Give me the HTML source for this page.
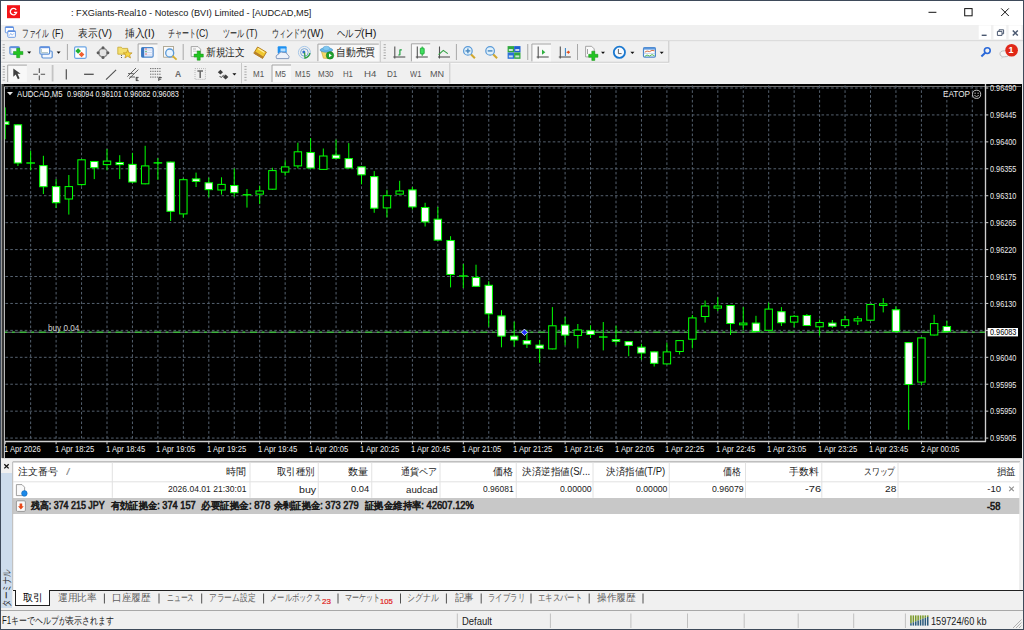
<!DOCTYPE html>
<html><head><meta charset="utf-8"><style>
html,body{margin:0;padding:0}
body{width:1024px;height:630px;position:relative;overflow:hidden;background:#f0f0f0;font-family:"Liberation Sans",sans-serif}
.t{position:absolute;white-space:nowrap;line-height:1;transform-origin:0 0}
.b{position:absolute;box-sizing:border-box}
svg{position:absolute;left:0;top:0}
</style></head><body>
<div class="b" style="left:1px;top:1px;width:1022px;height:24px;background:#fff"></div>
<svg width="1024" height="630" viewBox="0 0 1024 630"><line x1="1" y1="40.7" x2="1023" y2="40.7" stroke="#d8d8d8" stroke-width="1"/><line x1="1" y1="62.3" x2="668.8" y2="62.3" stroke="#c4c4c4" stroke-width="1"/><line x1="668.8" y1="41" x2="668.8" y2="62.5" stroke="#c8c8c8" stroke-width="1"/><line x1="1" y1="63.2" x2="668.8" y2="63.2" stroke="#ffffff" stroke-width="0.8"/><line x1="449.8" y1="63" x2="449.8" y2="83.5" stroke="#c8c8c8" stroke-width="1"/><line x1="380.3" y1="41" x2="380.3" y2="62" stroke="#c8c8c8" stroke-width="1"/><line x1="241.5" y1="63" x2="241.5" y2="83.5" stroke="#c8c8c8" stroke-width="1"/><rect x="2.6" y="44.20" width="2.2" height="1" fill="#a8a8a8"/><rect x="2.6" y="46.90" width="2.2" height="1" fill="#a8a8a8"/><rect x="2.6" y="49.60" width="2.2" height="1" fill="#a8a8a8"/><rect x="2.6" y="52.30" width="2.2" height="1" fill="#a8a8a8"/><rect x="2.6" y="55.00" width="2.2" height="1" fill="#a8a8a8"/><rect x="2.6" y="57.70" width="2.2" height="1" fill="#a8a8a8"/><rect x="383.6" y="44.20" width="2.2" height="1" fill="#a8a8a8"/><rect x="383.6" y="46.90" width="2.2" height="1" fill="#a8a8a8"/><rect x="383.6" y="49.60" width="2.2" height="1" fill="#a8a8a8"/><rect x="383.6" y="52.30" width="2.2" height="1" fill="#a8a8a8"/><rect x="383.6" y="55.00" width="2.2" height="1" fill="#a8a8a8"/><rect x="383.6" y="57.70" width="2.2" height="1" fill="#a8a8a8"/><rect x="2.7" y="66.10" width="2.2" height="1" fill="#a8a8a8"/><rect x="2.7" y="68.80" width="2.2" height="1" fill="#a8a8a8"/><rect x="2.7" y="71.50" width="2.2" height="1" fill="#a8a8a8"/><rect x="2.7" y="74.20" width="2.2" height="1" fill="#a8a8a8"/><rect x="2.7" y="76.90" width="2.2" height="1" fill="#a8a8a8"/><rect x="2.7" y="79.60" width="2.2" height="1" fill="#a8a8a8"/><rect x="244.4" y="66.10" width="2.2" height="1" fill="#a8a8a8"/><rect x="244.4" y="68.80" width="2.2" height="1" fill="#a8a8a8"/><rect x="244.4" y="71.50" width="2.2" height="1" fill="#a8a8a8"/><rect x="244.4" y="74.20" width="2.2" height="1" fill="#a8a8a8"/><rect x="244.4" y="76.90" width="2.2" height="1" fill="#a8a8a8"/><rect x="244.4" y="79.60" width="2.2" height="1" fill="#a8a8a8"/><rect x="9.9" y="46.9" width="9.3" height="7.3" rx="1.2" fill="#f4f8ff" stroke="#5b8fd4" stroke-width="1.2"/><rect x="9.6" y="46.6" width="9.9" height="1.6" fill="#5f8fe0"/><line x1="11" y1="49" x2="11" y2="53" stroke="#9ab" stroke-width="0.6"/><path d="M16.65 48.3 h3.1 v3.1500000000000004 h3.1500000000000004 v3.1 h-3.1500000000000004 v3.1500000000000004 h-3.1 v-3.1500000000000004 h-3.1500000000000004 v-3.1 h3.1500000000000004 Z" fill="#22c422" stroke="#109010" stroke-width="0.5"/><path d="M27.2 51.5 L31.2 51.5 L29.2 53.8 Z" fill="#101010"/><rect x="41.9" y="51.0" width="10.3" height="7.000000000000003" rx="1.2" fill="#f4f8ff" stroke="#5b8fd4" stroke-width="1.2"/><rect x="39.9" y="46.9" width="9.700000000000006" height="7.3" rx="1.2" fill="#ffffff" stroke="#5b8fd4" stroke-width="1.2"/><rect x="39.6" y="46.6" width="10.3" height="1.6" fill="#5f8fe0"/><path d="M41.5 49 v3.5 h6.5" fill="none" stroke="#8aa" stroke-width="0.6"/><path d="M56.6 51.5 L60.6 51.5 L58.6 53.8 Z" fill="#101010"/><line x1="67.4" y1="44" x2="67.4" y2="60" stroke="#a8a8a8" stroke-width="1"/><rect x="74.6" y="46.800000000000004" width="11.599999999999998" height="11.499999999999996" rx="1.2" fill="#ffffff" stroke="#6aa4e4" stroke-width="1.2"/><path d="M78.1 48.2 L81 51 L78.1 53.8 L75.3 51 Z" fill="#20b030"/><path d="M81.6 51.7 L84.4 54.5 L81.6 57.3 L78.8 54.5 Z" fill="#f06030"/><circle cx="103" cy="52.7" r="4.2" fill="#e4e4e4" stroke="#8c8c8c" stroke-width="1.5"/><circle cx="103" cy="47.8" r="1.5" fill="#5c5c5c"/><circle cx="103" cy="57.6" r="1.5" fill="#5c5c5c"/><circle cx="98.1" cy="52.7" r="1.5" fill="#5c5c5c"/><circle cx="107.9" cy="52.7" r="1.5" fill="#5c5c5c"/><path d="M117.8 47.2 h3.5 l1 1.2 h5.4 v5.8 h-9.9 Z" fill="#f4e070" stroke="#c8a830" stroke-width="0.8"/><path d="M127.7 49.8 L128.9 52.8 L132.1 52.9 L129.6 54.9 L130.5 58 L127.7 56.2 L124.9 58 L125.8 54.9 L123.3 52.9 L126.5 52.8 Z" fill="#f8d840" stroke="#c09020" stroke-width="0.7"/><line x1="121.5" y1="55" x2="121.5" y2="58.5" stroke="#404040" stroke-width="0.8" stroke-dasharray="1 1"/><rect x="137.6" y="43.4" width="19.900000000000006" height="18.1" fill="#f8f8f8"/><path d="M138.1 61.5 L138.1 43.9 L157.5 43.9" fill="none" stroke="#a4a4a4" stroke-width="1"/><rect x="141.6" y="47.6" width="11.49999999999999" height="9.599999999999998" rx="1.2" fill="#eef4ff" stroke="#4a86cc" stroke-width="1.2"/><rect x="141.6" y="47.6" width="2.6" height="9.6" fill="#3a76c0"/><line x1="145" y1="50" x2="153" y2="50" stroke="#b8c8e8" stroke-width="0.6"/><line x1="145" y1="52.5" x2="153" y2="52.5" stroke="#b8c8e8" stroke-width="0.6"/><line x1="145" y1="55" x2="153" y2="55" stroke="#b8c8e8" stroke-width="0.6"/><circle cx="146" cy="49" r="0.7" fill="#e04040"/><circle cx="146" cy="51.5" r="0.7" fill="#40a040"/><circle cx="146" cy="54" r="0.7" fill="#e04040"/><rect x="163.6" y="46.4" width="9.8" height="10.8" fill="#fafafa" stroke="#a09880" stroke-width="0.8"/><circle cx="169.7" cy="53" r="4" fill="#e8f4ff" stroke="#5a9ad8" stroke-width="1.3"/><line x1="172.6" y1="56" x2="176.6" y2="59.6" stroke="#d8b030" stroke-width="1.8"/><line x1="183.2" y1="44" x2="183.2" y2="60" stroke="#a8a8a8" stroke-width="1"/><path d="M191.2 46.6 h6.8 l2.6 2.6 v7.4 h-9.4 Z" fill="#fafafa" stroke="#909090" stroke-width="0.8"/><line x1="193" y1="49" x2="196" y2="49" stroke="#888" stroke-width="0.6"/><line x1="193" y1="51.2" x2="198" y2="51.2" stroke="#aaa" stroke-width="0.6"/><path d="M197.2 51.0 h3.0 v3.0999999999999996 h3.0999999999999996 v3.0 h-3.0999999999999996 v3.0999999999999996 h-3.0 v-3.0999999999999996 h-3.0999999999999996 v-3.0 h3.0999999999999996 Z" fill="#22c422" stroke="#109010" stroke-width="0.5"/><path d="M257.6 47 L266.4 52.2 L262.6 58.4 L253.8 53.2 Z" fill="#f0c830" stroke="#b07818" stroke-width="0.9"/><path d="M254 53.4 L262.6 58.4 L263.6 56.8 L255.2 51.6 Z" fill="#b8802a"/><path d="M257.8 48.6 L264.4 52.6" stroke="#fff0a0" stroke-width="1.2"/><rect x="277.7" y="46.2" width="8.9" height="7.6" rx="1" fill="#1e90f0"/><rect x="280.5" y="48.5" width="5" height="3" fill="#b8e0ff"/><path d="M276.6 58.6 Q275 55.2 278.4 54.4 Q279.6 51.2 283.2 52.4 Q287 51.8 287.6 54.8 Q290.2 55.8 288.6 58.6 Z" fill="#eef2fa" stroke="#7890b8" stroke-width="0.9"/><circle cx="304.4" cy="52.4" r="6" fill="none" stroke="#a8c8e8" stroke-width="1"/><circle cx="304.4" cy="52.4" r="3.8" fill="none" stroke="#7aa8d8" stroke-width="1"/><circle cx="303.8" cy="52" r="1.5" fill="#3070d0"/><path d="M304.6 52.6 L305 58.2 Q309 57 310 53" fill="none" stroke="#30a040" stroke-width="1.3"/><rect x="317.4" y="43.6" width="61.400000000000034" height="17.6" fill="#f8f8f8"/><path d="M317.9 61.2 L317.9 44.1 L378.8 44.1" fill="none" stroke="#a4a4a4" stroke-width="1"/><path d="M321.2 50.6 L331.6 51.4 L329.6 58.6 L323.4 58.2 Z" fill="#f4d868" stroke="#c8a030" stroke-width="0.6"/><ellipse cx="326.4" cy="50" rx="6.3" ry="2.2" fill="#68b8e8" stroke="#3a88c0" stroke-width="0.6"/><ellipse cx="326.4" cy="48.4" rx="3.4" ry="2.2" fill="#80c8f0" stroke="#4a98d0" stroke-width="0.5"/><circle cx="330" cy="55.4" r="3.7" fill="#20a030" stroke="#108018" stroke-width="0.6"/><path d="M329 53.6 L331.8 55.4 L329 57.2 Z" fill="#ffffff"/><line x1="394.8" y1="46.5" x2="394.8" y2="58.5" stroke="#555" stroke-width="1.1"/><line x1="393.3" y1="57" x2="405.3" y2="57" stroke="#555" stroke-width="1.1"/><path d="M399.9 49.4 V55.2 M398.3 55 H399.9 M399.9 49.8 H401.8" fill="none" stroke="#20a040" stroke-width="1.2"/><rect x="410.9" y="43.3" width="19.30000000000001" height="18.1" fill="#f8f8f8"/><path d="M411.4 61.4 L411.4 43.8 L430.2 43.8" fill="none" stroke="#a4a4a4" stroke-width="1"/><line x1="417.3" y1="46.5" x2="417.3" y2="58.5" stroke="#555" stroke-width="1.1"/><line x1="415.8" y1="57" x2="427.8" y2="57" stroke="#555" stroke-width="1.1"/><line x1="422.2" y1="46.5" x2="422.2" y2="56" stroke="#30b040" stroke-width="1"/><rect x="420.3" y="48" width="3.9" height="6" rx="0.8" fill="#40e060" stroke="#18a030" stroke-width="0.8"/><line x1="439.5" y1="46.5" x2="439.5" y2="58.5" stroke="#555" stroke-width="1.1"/><line x1="438.0" y1="57" x2="450.0" y2="57" stroke="#555" stroke-width="1.1"/><path d="M438.6 54.7 L443.3 50.4 L447.8 53.6" fill="none" stroke="#30a040" stroke-width="1.1"/><line x1="456.4" y1="44" x2="456.4" y2="60" stroke="#a8a8a8" stroke-width="1"/><line x1="470.9" y1="54.2" x2="474.9" y2="58.2" stroke="#d0a830" stroke-width="2"/><circle cx="467.9" cy="50.9" r="4.3" fill="#dff0fa" stroke="#5a9ad8" stroke-width="1.2"/><line x1="465.5" y1="50.9" x2="470.29999999999995" y2="50.9" stroke="#4a88c0" stroke-width="1.4"/><line x1="467.9" y1="48.5" x2="467.9" y2="53.3" stroke="#4a88c0" stroke-width="1.4"/><line x1="493.1" y1="54.2" x2="497.1" y2="58.2" stroke="#d0a830" stroke-width="2"/><circle cx="490.1" cy="50.9" r="4.3" fill="#dff0fa" stroke="#5a9ad8" stroke-width="1.2"/><line x1="487.70000000000005" y1="50.9" x2="492.5" y2="50.9" stroke="#4a88c0" stroke-width="1.4"/><rect x="507.6" y="46.1" width="6.4" height="6.3" fill="#30a840"/><rect x="514.1" y="46.1" width="6.4" height="6.3" fill="#2060d0"/><rect x="507.6" y="52.5" width="6.4" height="6.3" fill="#2a70d8"/><rect x="514.1" y="52.5" width="6.4" height="6.3" fill="#30a840"/><rect x="508.8" y="49" width="4" height="2" fill="#e8f0f0" opacity="0.85"/><rect x="515.3" y="49" width="4" height="2" fill="#e8f0f0" opacity="0.85"/><rect x="508.8" y="55.4" width="4" height="2" fill="#e8f0f0" opacity="0.85"/><rect x="515.3" y="55.4" width="4" height="2" fill="#e8f0f0" opacity="0.85"/><line x1="527.75" y1="44" x2="527.75" y2="60" stroke="#a8a8a8" stroke-width="1"/><rect x="531.4" y="43.5" width="19.600000000000023" height="17.9" fill="#f8f8f8"/><path d="M531.9 61.4 L531.9 44.0 L551 44.0" fill="none" stroke="#a4a4a4" stroke-width="1"/><line x1="538.2" y1="46.5" x2="538.2" y2="58.5" stroke="#555" stroke-width="1.1"/><line x1="536.7" y1="57" x2="548.7" y2="57" stroke="#555" stroke-width="1.1"/><path d="M542 49.6 L545.3 52.2 L542 54.8 Z" fill="#30b040"/><line x1="560.3" y1="46.5" x2="560.3" y2="58.5" stroke="#555" stroke-width="1.1"/><line x1="558.8" y1="57" x2="570.8" y2="57" stroke="#555" stroke-width="1.1"/><line x1="565.4" y1="48" x2="565.4" y2="56" stroke="#3080c8" stroke-width="1"/><path d="M566.2 52.2 L569 50.4 L569 54 Z" fill="#e05020"/><rect x="568" y="51.6" width="2" height="1.2" fill="#e05020"/><line x1="577.5" y1="44" x2="577.5" y2="60" stroke="#a8a8a8" stroke-width="1"/><path d="M585.6 46.3 h6 l2.6 2.6 v8 h-8.6 Z" fill="#fafafa" stroke="#909090" stroke-width="0.8"/><path d="M587.5 49 v5" stroke="#666" stroke-width="0.6"/><path d="M591.8 51.199999999999996 h3.0 v3.0999999999999996 h3.0999999999999996 v3.0 h-3.0999999999999996 v3.0999999999999996 h-3.0 v-3.0999999999999996 h-3.0999999999999996 v-3.0 h3.0999999999999996 Z" fill="#22c422" stroke="#109010" stroke-width="0.5"/><path d="M601 51.8 L605 51.8 L603 54.099999999999994 Z" fill="#101010"/><circle cx="619.4" cy="52.3" r="5.6" fill="#f8fbff" stroke="#1a78d0" stroke-width="1.8"/><path d="M618.4 49 V53.6 H621.6" fill="none" stroke="#404040" stroke-width="0.8"/><path d="M630.4 51.8 L634.4 51.8 L632.4 54.099999999999994 Z" fill="#101010"/><rect x="643.5" y="47.5" width="11.900000000000023" height="9.7" rx="1.2" fill="#ffffff" stroke="#4a86cc" stroke-width="1.2"/><rect x="643.6" y="47.6" width="11.8" height="2" fill="#5a96dc"/><path d="M644.8 52.2 L647 51 L649.5 51.6 L652 50.4 L654.5 50.8" fill="none" stroke="#d06030" stroke-width="0.9"/><line x1="643.6" y1="53.4" x2="655.4" y2="53.4" stroke="#9ab8e0" stroke-width="0.6"/><path d="M644.8 56.4 L647 55 L649.5 56 L652 54.6 L654.5 55.8" fill="none" stroke="#40b040" stroke-width="0.9"/><path d="M659.7 51.8 L663.7 51.8 L661.7 54.099999999999994 Z" fill="#101010"/><circle cx="987.3" cy="50.6" r="2.9" fill="none" stroke="#2a68d8" stroke-width="1.6"/><line x1="985.2" y1="52.8" x2="981.4" y2="56.4" stroke="#2a68d8" stroke-width="2"/><ellipse cx="1004.5" cy="53.8" rx="4.5" ry="3" fill="#f4f4f4" stroke="#b0b0b0" stroke-width="0.8"/><path d="M1002 56.2 L1001 59 L1005 56.6 Z" fill="#d8d8d8"/><circle cx="1011.6" cy="50.2" r="6.3" fill="#e02818"/><rect x="7.2" y="64.6" width="19.7" height="17.400000000000006" fill="#f8f8f8"/><path d="M7.7 82 L7.7 65.1 L26.9 65.1" fill="none" stroke="#a4a4a4" stroke-width="1"/><path d="M13.3 68.5 L13.3 76.8 L15.7 74.6 L17.9 79.2 L19.6 78.3 L17.5 73.8 L20.6 73.7 Z" fill="#404040"/><path d="M39.3 68.2 V72.9 M39.3 75.6 V80.3 M33.2 74.3 H37.9 M40.7 74.3 H45.1" stroke="#505050" stroke-width="1.1" fill="none"/><line x1="52.6" y1="65" x2="52.6" y2="81.5" stroke="#c4c4c4" stroke-width="1.8"/><line x1="66.3" y1="69.2" x2="66.3" y2="79.4" stroke="#505050" stroke-width="1.2"/><line x1="84.1" y1="74.3" x2="93.7" y2="74.3" stroke="#505050" stroke-width="1.3"/><line x1="106" y1="79.6" x2="116.1" y2="69.9" stroke="#505050" stroke-width="1.1"/><path d="M127.4 76.6 L136 68 M129 78.8 L138.4 69.6 M128 73.6 L133.6 73.6 M129.6 77 L135 77" stroke="#505050" stroke-width="0.9" fill="none"/><path d="M136 77.4 h2.6 M136 79 h2 M136 80.6 h2.6 M136.2 77.2 v3.6" stroke="#404040" stroke-width="0.9" fill="none"/><line x1="150" y1="68.6" x2="161" y2="68.6" stroke="#606060" stroke-width="0.9" stroke-dasharray="1.4 0.9"/><line x1="150" y1="71.3" x2="161" y2="71.3" stroke="#606060" stroke-width="0.9" stroke-dasharray="1.4 0.9"/><line x1="150" y1="74.2" x2="161" y2="74.2" stroke="#606060" stroke-width="0.9" stroke-dasharray="1.4 0.9"/><line x1="150" y1="77.1" x2="161" y2="77.1" stroke="#606060" stroke-width="0.9" stroke-dasharray="1.4 0.9"/><path d="M158.8 77.6 v3.4 M158.8 77.6 h3 M158.8 79.2 h2.4" stroke="#404040" stroke-width="0.9" fill="none"/><rect x="195" y="68.6" width="10.4" height="10.8" fill="none" stroke="#a8a8a8" stroke-width="0.8" stroke-dasharray="1 1"/><path d="M197.4 71 H203 M200.2 71 V78" stroke="#686868" stroke-width="1.5" fill="none"/><path d="M220.4 69.8 L223 72.2 L220.4 74.6 L217.8 72.2 Z" fill="#404040"/><path d="M225.6 74.4 L228.4 76.9 L225.6 79.5 L222.8 76.9 Z" fill="#404040"/><path d="M219.6 76 L221.2 77.6 L223.8 74.8" fill="none" stroke="#404040" stroke-width="1"/><path d="M232.4 73.3 L236.4 73.3 L234.4 75.6 Z" fill="#101010"/><rect x="271.5" y="64.5" width="19.5" height="17.5" fill="#f8f8f8"/><path d="M272.0 82 L272.0 65.0 L291 65.0" fill="none" stroke="#a4a4a4" stroke-width="1"/><rect x="7" y="5.2" width="13" height="13" fill="#f41418"/><path d="M16.2 9.9 A3.2 3.2 0 1 0 16.6 12.4 L13.9 12.4" fill="none" stroke="#fff" stroke-width="1.35"/><line x1="928.5" y1="12.3" x2="936.4" y2="12.3" stroke="#111" stroke-width="1"/><rect x="964.7" y="8.6" width="7.4" height="7.2" fill="none" stroke="#111" stroke-width="1"/><path d="M1001.2 8.4 L1008.8 16 M1008.8 8.4 L1001.2 16" stroke="#111" stroke-width="1"/><rect x="978.7" y="25.4" width="12.299999999999955" height="13.9" fill="#ffffff"/><rect x="993.5" y="25.4" width="12.799999999999955" height="13.9" fill="#ffffff"/><rect x="1008.6" y="25.4" width="12.799999999999955" height="13.9" fill="#ffffff"/><rect x="981.7" y="34.6" width="4.9" height="1.4" fill="#4a5870"/><path d="M997.4 31.4 h4.6 v4 h-4.6 Z M999 31.4 v-1.6 h4.6 v4 h-1.6" fill="none" stroke="#4a5870" stroke-width="1"/><path d="M1012.8 30.4 L1017.8 35.6 M1017.8 30.4 L1012.8 35.6" stroke="#4a5870" stroke-width="1.5"/><rect x="5.3" y="26.8" width="8.2" height="6" rx="0.8" fill="#ffffff" stroke="#6d9be4" stroke-width="1"/><rect x="5.3" y="26.6" width="8.2" height="1.4" fill="#5f8fe0"/><rect x="7.8" y="30.8" width="7.6" height="6.5" rx="0.8" fill="#ffffff" stroke="#6d9be4" stroke-width="1"/><rect x="7.8" y="30.6" width="7.6" height="1.4" fill="#5f8fe0"/><path d="M9.3 35.6 L10.8 33.4 L12.2 35.2 L13.8 33.4" fill="none" stroke="#80a8e8" stroke-width="0.8"/></svg>
<div class="b" style="left:2px;top:84px;width:1021px;height:374px;background:#000"></div>
<div class="b" style="left:1px;top:84px;width:1.3px;height:374px;background:#9a9a9a"></div>
<div class="b" style="left:2.3px;top:84px;width:1.8px;height:374px;background:#383838"></div>
<div class="b" style="left:4px;top:86.5px;width:1px;height:371px;background:#b8b8b8"></div>
<div class="b" style="left:4px;top:86.3px;width:1017px;height:0.7px;background:#707070"></div>
<div class="b" style="left:1021.5px;top:84px;width:1.5px;height:374px;background:#e8e8e8"></div>
<div class="b" style="left:2px;top:458.3px;width:1021px;height:1px;background:#d8d8d8"></div>
<svg style="position:absolute;left:0;top:0" width="1024" height="630" viewBox="0 0 1024 630"><line x1="30.65" y1="85.5" x2="30.65" y2="441" stroke="#566270" stroke-width="1" stroke-dasharray="2.6 2.2"/><line x1="56.10" y1="85.5" x2="56.10" y2="441" stroke="#566270" stroke-width="1" stroke-dasharray="2.6 2.2"/><line x1="81.55" y1="85.5" x2="81.55" y2="441" stroke="#566270" stroke-width="1" stroke-dasharray="2.6 2.2"/><line x1="107.00" y1="85.5" x2="107.00" y2="441" stroke="#566270" stroke-width="1" stroke-dasharray="2.6 2.2"/><line x1="132.45" y1="85.5" x2="132.45" y2="441" stroke="#566270" stroke-width="1" stroke-dasharray="2.6 2.2"/><line x1="157.90" y1="85.5" x2="157.90" y2="441" stroke="#566270" stroke-width="1" stroke-dasharray="2.6 2.2"/><line x1="183.35" y1="85.5" x2="183.35" y2="441" stroke="#566270" stroke-width="1" stroke-dasharray="2.6 2.2"/><line x1="208.80" y1="85.5" x2="208.80" y2="441" stroke="#566270" stroke-width="1" stroke-dasharray="2.6 2.2"/><line x1="234.25" y1="85.5" x2="234.25" y2="441" stroke="#566270" stroke-width="1" stroke-dasharray="2.6 2.2"/><line x1="259.70" y1="85.5" x2="259.70" y2="441" stroke="#566270" stroke-width="1" stroke-dasharray="2.6 2.2"/><line x1="285.15" y1="85.5" x2="285.15" y2="441" stroke="#566270" stroke-width="1" stroke-dasharray="2.6 2.2"/><line x1="310.60" y1="85.5" x2="310.60" y2="441" stroke="#566270" stroke-width="1" stroke-dasharray="2.6 2.2"/><line x1="336.05" y1="85.5" x2="336.05" y2="441" stroke="#566270" stroke-width="1" stroke-dasharray="2.6 2.2"/><line x1="361.50" y1="85.5" x2="361.50" y2="441" stroke="#566270" stroke-width="1" stroke-dasharray="2.6 2.2"/><line x1="386.95" y1="85.5" x2="386.95" y2="441" stroke="#566270" stroke-width="1" stroke-dasharray="2.6 2.2"/><line x1="412.40" y1="85.5" x2="412.40" y2="441" stroke="#566270" stroke-width="1" stroke-dasharray="2.6 2.2"/><line x1="437.85" y1="85.5" x2="437.85" y2="441" stroke="#566270" stroke-width="1" stroke-dasharray="2.6 2.2"/><line x1="463.30" y1="85.5" x2="463.30" y2="441" stroke="#566270" stroke-width="1" stroke-dasharray="2.6 2.2"/><line x1="488.75" y1="85.5" x2="488.75" y2="441" stroke="#566270" stroke-width="1" stroke-dasharray="2.6 2.2"/><line x1="514.20" y1="85.5" x2="514.20" y2="441" stroke="#566270" stroke-width="1" stroke-dasharray="2.6 2.2"/><line x1="539.65" y1="85.5" x2="539.65" y2="441" stroke="#566270" stroke-width="1" stroke-dasharray="2.6 2.2"/><line x1="565.10" y1="85.5" x2="565.10" y2="441" stroke="#566270" stroke-width="1" stroke-dasharray="2.6 2.2"/><line x1="590.55" y1="85.5" x2="590.55" y2="441" stroke="#566270" stroke-width="1" stroke-dasharray="2.6 2.2"/><line x1="616.00" y1="85.5" x2="616.00" y2="441" stroke="#566270" stroke-width="1" stroke-dasharray="2.6 2.2"/><line x1="641.45" y1="85.5" x2="641.45" y2="441" stroke="#566270" stroke-width="1" stroke-dasharray="2.6 2.2"/><line x1="666.90" y1="85.5" x2="666.90" y2="441" stroke="#566270" stroke-width="1" stroke-dasharray="2.6 2.2"/><line x1="692.35" y1="85.5" x2="692.35" y2="441" stroke="#566270" stroke-width="1" stroke-dasharray="2.6 2.2"/><line x1="717.80" y1="85.5" x2="717.80" y2="441" stroke="#566270" stroke-width="1" stroke-dasharray="2.6 2.2"/><line x1="743.25" y1="85.5" x2="743.25" y2="441" stroke="#566270" stroke-width="1" stroke-dasharray="2.6 2.2"/><line x1="768.70" y1="85.5" x2="768.70" y2="441" stroke="#566270" stroke-width="1" stroke-dasharray="2.6 2.2"/><line x1="794.15" y1="85.5" x2="794.15" y2="441" stroke="#566270" stroke-width="1" stroke-dasharray="2.6 2.2"/><line x1="819.60" y1="85.5" x2="819.60" y2="441" stroke="#566270" stroke-width="1" stroke-dasharray="2.6 2.2"/><line x1="845.05" y1="85.5" x2="845.05" y2="441" stroke="#566270" stroke-width="1" stroke-dasharray="2.6 2.2"/><line x1="870.50" y1="85.5" x2="870.50" y2="441" stroke="#566270" stroke-width="1" stroke-dasharray="2.6 2.2"/><line x1="895.95" y1="85.5" x2="895.95" y2="441" stroke="#566270" stroke-width="1" stroke-dasharray="2.6 2.2"/><line x1="921.40" y1="85.5" x2="921.40" y2="441" stroke="#566270" stroke-width="1" stroke-dasharray="2.6 2.2"/><line x1="946.85" y1="85.5" x2="946.85" y2="441" stroke="#566270" stroke-width="1" stroke-dasharray="2.6 2.2"/><line x1="972.30" y1="85.5" x2="972.30" y2="441" stroke="#566270" stroke-width="1" stroke-dasharray="2.6 2.2"/><line x1="5.5" y1="88.00" x2="985" y2="88.00" stroke="#566270" stroke-width="1" stroke-dasharray="2.6 2.2"/><line x1="5.5" y1="114.93" x2="985" y2="114.93" stroke="#566270" stroke-width="1" stroke-dasharray="2.6 2.2"/><line x1="5.5" y1="141.86" x2="985" y2="141.86" stroke="#566270" stroke-width="1" stroke-dasharray="2.6 2.2"/><line x1="5.5" y1="168.79" x2="985" y2="168.79" stroke="#566270" stroke-width="1" stroke-dasharray="2.6 2.2"/><line x1="5.5" y1="195.72" x2="985" y2="195.72" stroke="#566270" stroke-width="1" stroke-dasharray="2.6 2.2"/><line x1="5.5" y1="222.65" x2="985" y2="222.65" stroke="#566270" stroke-width="1" stroke-dasharray="2.6 2.2"/><line x1="5.5" y1="249.58" x2="985" y2="249.58" stroke="#566270" stroke-width="1" stroke-dasharray="2.6 2.2"/><line x1="5.5" y1="276.51" x2="985" y2="276.51" stroke="#566270" stroke-width="1" stroke-dasharray="2.6 2.2"/><line x1="5.5" y1="303.44" x2="985" y2="303.44" stroke="#566270" stroke-width="1" stroke-dasharray="2.6 2.2"/><line x1="5.5" y1="330.37" x2="985" y2="330.37" stroke="#566270" stroke-width="1" stroke-dasharray="2.6 2.2"/><line x1="5.5" y1="357.30" x2="985" y2="357.30" stroke="#566270" stroke-width="1" stroke-dasharray="2.6 2.2"/><line x1="5.5" y1="384.23" x2="985" y2="384.23" stroke="#566270" stroke-width="1" stroke-dasharray="2.6 2.2"/><line x1="5.5" y1="411.16" x2="985" y2="411.16" stroke="#566270" stroke-width="1" stroke-dasharray="2.6 2.2"/><line x1="5.5" y1="438.09" x2="985" y2="438.09" stroke="#566270" stroke-width="1" stroke-dasharray="2.6 2.2"/><line x1="5" y1="332.2" x2="985" y2="332.2" stroke="#6c7480" stroke-width="1.1"/><line x1="5" y1="332.3" x2="985" y2="332.3" stroke="#3cb43c" stroke-width="1.5" stroke-dasharray="7 4.6 2.8 4.8" stroke-dashoffset="4.6"/><defs><clipPath id="cc"><rect x="4.9" y="84" width="981" height="358"/></clipPath></defs><g clip-path="url(#cc)"><line x1="5.20" y1="107.4" x2="5.20" y2="139.3" stroke="#00ff00" stroke-width="1.0"/><rect x="1.50" y="121.80" width="7.4" height="2.60" fill="#ffffff" stroke="#00ff00" stroke-width="1.05"/><line x1="17.93" y1="124.3" x2="17.93" y2="166" stroke="#00ff00" stroke-width="1.0"/><rect x="14.23" y="124.80" width="7.4" height="38.20" fill="#ffffff" stroke="#00ff00" stroke-width="1.05"/><line x1="30.65" y1="150.7" x2="30.65" y2="170.3" stroke="#00ff00" stroke-width="1.0"/><line x1="26.35" y1="163" x2="34.95" y2="163" stroke="#00ff00" stroke-width="1.4"/><line x1="43.38" y1="155.8" x2="43.38" y2="194" stroke="#00ff00" stroke-width="1.0"/><rect x="39.67" y="165.60" width="7.4" height="21.10" fill="#ffffff" stroke="#00ff00" stroke-width="1.05"/><line x1="56.10" y1="179.1" x2="56.10" y2="208" stroke="#00ff00" stroke-width="1.0"/><rect x="52.40" y="186.60" width="7.4" height="16.10" fill="#ffffff" stroke="#00ff00" stroke-width="1.05"/><line x1="68.83" y1="175" x2="68.83" y2="214.6" stroke="#00ff00" stroke-width="1.0"/><rect x="65.12" y="186.60" width="7.4" height="12.40" fill="#000000" stroke="#00ff00" stroke-width="1.05"/><line x1="81.55" y1="159.3" x2="81.55" y2="185.7" stroke="#00ff00" stroke-width="1.0"/><rect x="77.85" y="159.80" width="7.4" height="24.80" fill="#000000" stroke="#00ff00" stroke-width="1.05"/><line x1="94.28" y1="161" x2="94.28" y2="179.1" stroke="#00ff00" stroke-width="1.0"/><rect x="90.58" y="161.50" width="7.4" height="6.20" fill="#ffffff" stroke="#00ff00" stroke-width="1.05"/><line x1="107.00" y1="149" x2="107.00" y2="170.3" stroke="#00ff00" stroke-width="1.0"/><rect x="103.30" y="161.10" width="7.4" height="3.50" fill="#000000" stroke="#00ff00" stroke-width="1.05"/><line x1="119.72" y1="155.2" x2="119.72" y2="179.1" stroke="#00ff00" stroke-width="1.0"/><rect x="116.02" y="162.50" width="7.4" height="2.10" fill="#ffffff" stroke="#00ff00" stroke-width="1.05"/><line x1="132.45" y1="153" x2="132.45" y2="183" stroke="#00ff00" stroke-width="1.0"/><rect x="128.75" y="164.40" width="7.4" height="17.60" fill="#ffffff" stroke="#00ff00" stroke-width="1.05"/><line x1="145.17" y1="145.8" x2="145.17" y2="184.3" stroke="#00ff00" stroke-width="1.0"/><rect x="141.47" y="165.90" width="7.4" height="17.90" fill="#000000" stroke="#00ff00" stroke-width="1.05"/><line x1="157.90" y1="158.1" x2="157.90" y2="179.8" stroke="#00ff00" stroke-width="1.0"/><line x1="153.60" y1="162.9" x2="162.20" y2="162.9" stroke="#00ff00" stroke-width="1.4"/><line x1="170.62" y1="161.6" x2="170.62" y2="221" stroke="#00ff00" stroke-width="1.0"/><rect x="166.92" y="162.10" width="7.4" height="49.20" fill="#ffffff" stroke="#00ff00" stroke-width="1.05"/><line x1="183.35" y1="178.1" x2="183.35" y2="217.5" stroke="#00ff00" stroke-width="1.0"/><rect x="179.65" y="179.70" width="7.4" height="34.20" fill="#000000" stroke="#00ff00" stroke-width="1.05"/><line x1="196.07" y1="172.6" x2="196.07" y2="187" stroke="#00ff00" stroke-width="1.0"/><rect x="192.38" y="178.90" width="7.4" height="2.50" fill="#ffffff" stroke="#00ff00" stroke-width="1.05"/><line x1="208.80" y1="177.7" x2="208.80" y2="197.3" stroke="#00ff00" stroke-width="1.0"/><rect x="205.10" y="182.80" width="7.4" height="6.80" fill="#ffffff" stroke="#00ff00" stroke-width="1.05"/><line x1="221.52" y1="177.3" x2="221.52" y2="194.6" stroke="#00ff00" stroke-width="1.0"/><rect x="217.82" y="184.40" width="7.4" height="5.60" fill="#000000" stroke="#00ff00" stroke-width="1.05"/><line x1="234.25" y1="168.5" x2="234.25" y2="196.7" stroke="#00ff00" stroke-width="1.0"/><rect x="230.55" y="185.50" width="7.4" height="7.20" fill="#ffffff" stroke="#00ff00" stroke-width="1.05"/><line x1="246.97" y1="189" x2="246.97" y2="207.6" stroke="#00ff00" stroke-width="1.0"/><line x1="242.67" y1="194.8" x2="251.28" y2="194.8" stroke="#00ff00" stroke-width="1.4"/><line x1="259.70" y1="185.6" x2="259.70" y2="204.1" stroke="#00ff00" stroke-width="1.0"/><rect x="256.00" y="191.00" width="7.4" height="3.10" fill="#000000" stroke="#00ff00" stroke-width="1.05"/><line x1="272.42" y1="167.8" x2="272.42" y2="189.7" stroke="#00ff00" stroke-width="1.0"/><rect x="268.72" y="170.60" width="7.4" height="18.60" fill="#000000" stroke="#00ff00" stroke-width="1.05"/><line x1="285.15" y1="160.2" x2="285.15" y2="175.7" stroke="#00ff00" stroke-width="1.0"/><rect x="281.45" y="166.90" width="7.4" height="5.20" fill="#000000" stroke="#00ff00" stroke-width="1.05"/><line x1="297.88" y1="142.7" x2="297.88" y2="168.5" stroke="#00ff00" stroke-width="1.0"/><rect x="294.18" y="151.80" width="7.4" height="14.10" fill="#000000" stroke="#00ff00" stroke-width="1.05"/><line x1="310.60" y1="138.1" x2="310.60" y2="168.5" stroke="#00ff00" stroke-width="1.0"/><rect x="306.90" y="152.50" width="7.4" height="15.50" fill="#ffffff" stroke="#00ff00" stroke-width="1.05"/><line x1="323.32" y1="148.5" x2="323.32" y2="169.9" stroke="#00ff00" stroke-width="1.0"/><rect x="319.62" y="156.00" width="7.4" height="13.40" fill="#000000" stroke="#00ff00" stroke-width="1.05"/><line x1="336.05" y1="139.6" x2="336.05" y2="158.8" stroke="#00ff00" stroke-width="1.0"/><rect x="332.35" y="155.10" width="7.4" height="3.20" fill="#ffffff" stroke="#00ff00" stroke-width="1.05"/><line x1="348.77" y1="143.1" x2="348.77" y2="168.5" stroke="#00ff00" stroke-width="1.0"/><rect x="345.07" y="158.60" width="7.4" height="9.40" fill="#ffffff" stroke="#00ff00" stroke-width="1.05"/><line x1="361.50" y1="166.4" x2="361.50" y2="184.3" stroke="#00ff00" stroke-width="1.0"/><rect x="357.80" y="166.90" width="7.4" height="7.90" fill="#ffffff" stroke="#00ff00" stroke-width="1.05"/><line x1="374.22" y1="171.1" x2="374.22" y2="212.8" stroke="#00ff00" stroke-width="1.0"/><rect x="370.52" y="176.60" width="7.4" height="31.60" fill="#ffffff" stroke="#00ff00" stroke-width="1.05"/><line x1="386.95" y1="189.8" x2="386.95" y2="217.3" stroke="#00ff00" stroke-width="1.0"/><rect x="383.25" y="195.70" width="7.4" height="12.20" fill="#000000" stroke="#00ff00" stroke-width="1.05"/><line x1="399.67" y1="180.8" x2="399.67" y2="194.6" stroke="#00ff00" stroke-width="1.0"/><rect x="395.97" y="191.00" width="7.4" height="3.10" fill="#000000" stroke="#00ff00" stroke-width="1.05"/><line x1="412.40" y1="187" x2="412.40" y2="209.6" stroke="#00ff00" stroke-width="1.0"/><rect x="408.70" y="189.90" width="7.4" height="17.00" fill="#ffffff" stroke="#00ff00" stroke-width="1.05"/><line x1="425.12" y1="202.8" x2="425.12" y2="226.5" stroke="#00ff00" stroke-width="1.0"/><rect x="421.43" y="207.50" width="7.4" height="14.40" fill="#ffffff" stroke="#00ff00" stroke-width="1.05"/><line x1="437.85" y1="207" x2="437.85" y2="240.6" stroke="#00ff00" stroke-width="1.0"/><rect x="434.15" y="219.20" width="7.4" height="20.90" fill="#ffffff" stroke="#00ff00" stroke-width="1.05"/><line x1="450.57" y1="236.2" x2="450.57" y2="287.4" stroke="#00ff00" stroke-width="1.0"/><rect x="446.88" y="240.50" width="7.4" height="34.00" fill="#ffffff" stroke="#00ff00" stroke-width="1.05"/><line x1="463.30" y1="264" x2="463.30" y2="288" stroke="#00ff00" stroke-width="1.0"/><line x1="459.00" y1="276" x2="467.60" y2="276" stroke="#00ff00" stroke-width="1.4"/><line x1="476.02" y1="264.7" x2="476.02" y2="286.8" stroke="#00ff00" stroke-width="1.0"/><rect x="472.32" y="277.50" width="7.4" height="8.80" fill="#ffffff" stroke="#00ff00" stroke-width="1.05"/><line x1="488.75" y1="281.2" x2="488.75" y2="326.7" stroke="#00ff00" stroke-width="1.0"/><rect x="485.05" y="285.30" width="7.4" height="28.50" fill="#ffffff" stroke="#00ff00" stroke-width="1.05"/><line x1="501.47" y1="310.2" x2="501.47" y2="347.3" stroke="#00ff00" stroke-width="1.0"/><rect x="497.77" y="315.90" width="7.4" height="20.20" fill="#ffffff" stroke="#00ff00" stroke-width="1.05"/><line x1="514.20" y1="321.6" x2="514.20" y2="346.7" stroke="#00ff00" stroke-width="1.0"/><rect x="510.50" y="336.10" width="7.4" height="3.90" fill="#ffffff" stroke="#00ff00" stroke-width="1.05"/><line x1="526.93" y1="329.8" x2="526.93" y2="348" stroke="#00ff00" stroke-width="1.0"/><rect x="523.23" y="340.60" width="7.4" height="3.50" fill="#ffffff" stroke="#00ff00" stroke-width="1.05"/><line x1="539.65" y1="340" x2="539.65" y2="362.8" stroke="#00ff00" stroke-width="1.0"/><rect x="535.95" y="345.10" width="7.4" height="3.20" fill="#ffffff" stroke="#00ff00" stroke-width="1.05"/><line x1="552.38" y1="307.1" x2="552.38" y2="349.4" stroke="#00ff00" stroke-width="1.0"/><rect x="548.67" y="325.80" width="7.4" height="23.10" fill="#000000" stroke="#00ff00" stroke-width="1.05"/><line x1="565.10" y1="317" x2="565.10" y2="345.3" stroke="#00ff00" stroke-width="1.0"/><rect x="561.40" y="325.10" width="7.4" height="10.00" fill="#ffffff" stroke="#00ff00" stroke-width="1.05"/><line x1="577.83" y1="324" x2="577.83" y2="348.4" stroke="#00ff00" stroke-width="1.0"/><rect x="574.12" y="329.90" width="7.4" height="5.60" fill="#000000" stroke="#00ff00" stroke-width="1.05"/><line x1="590.55" y1="325.3" x2="590.55" y2="338" stroke="#00ff00" stroke-width="1.0"/><rect x="586.85" y="330.70" width="7.4" height="3.80" fill="#ffffff" stroke="#00ff00" stroke-width="1.05"/><line x1="603.27" y1="322" x2="603.27" y2="350.4" stroke="#00ff00" stroke-width="1.0"/><line x1="598.98" y1="337" x2="607.57" y2="337" stroke="#00ff00" stroke-width="1.4"/><line x1="616.00" y1="325.7" x2="616.00" y2="345.3" stroke="#00ff00" stroke-width="1.0"/><rect x="612.30" y="339.60" width="7.4" height="1.70" fill="#ffffff" stroke="#00ff00" stroke-width="1.05"/><line x1="628.73" y1="341.1" x2="628.73" y2="356.2" stroke="#00ff00" stroke-width="1.0"/><rect x="625.02" y="341.60" width="7.4" height="3.80" fill="#ffffff" stroke="#00ff00" stroke-width="1.05"/><line x1="641.45" y1="343.8" x2="641.45" y2="359.7" stroke="#00ff00" stroke-width="1.0"/><rect x="637.75" y="347.20" width="7.4" height="5.80" fill="#ffffff" stroke="#00ff00" stroke-width="1.05"/><line x1="654.18" y1="351.4" x2="654.18" y2="366.5" stroke="#00ff00" stroke-width="1.0"/><rect x="650.48" y="351.90" width="7.4" height="11.40" fill="#ffffff" stroke="#00ff00" stroke-width="1.05"/><line x1="666.90" y1="342.6" x2="666.90" y2="364.4" stroke="#00ff00" stroke-width="1.0"/><rect x="663.20" y="351.90" width="7.4" height="12.00" fill="#000000" stroke="#00ff00" stroke-width="1.05"/><line x1="679.62" y1="340.1" x2="679.62" y2="354.5" stroke="#00ff00" stroke-width="1.0"/><rect x="675.92" y="340.60" width="7.4" height="10.90" fill="#000000" stroke="#00ff00" stroke-width="1.05"/><line x1="692.35" y1="315" x2="692.35" y2="348.4" stroke="#00ff00" stroke-width="1.0"/><rect x="688.65" y="317.90" width="7.4" height="21.30" fill="#000000" stroke="#00ff00" stroke-width="1.05"/><line x1="705.08" y1="300.5" x2="705.08" y2="322.6" stroke="#00ff00" stroke-width="1.0"/><rect x="701.38" y="306.00" width="7.4" height="10.50" fill="#000000" stroke="#00ff00" stroke-width="1.05"/><line x1="717.80" y1="297.2" x2="717.80" y2="311.2" stroke="#00ff00" stroke-width="1.0"/><rect x="714.10" y="306.00" width="7.4" height="2.10" fill="#000000" stroke="#00ff00" stroke-width="1.05"/><line x1="730.52" y1="305" x2="730.52" y2="335" stroke="#00ff00" stroke-width="1.0"/><rect x="726.82" y="305.50" width="7.4" height="18.00" fill="#ffffff" stroke="#00ff00" stroke-width="1.05"/><line x1="743.25" y1="307.1" x2="743.25" y2="330.2" stroke="#00ff00" stroke-width="1.0"/><rect x="739.55" y="323.10" width="7.4" height="1.70" fill="#000000" stroke="#00ff00" stroke-width="1.05"/><line x1="755.98" y1="315.8" x2="755.98" y2="331.9" stroke="#00ff00" stroke-width="1.0"/><rect x="752.27" y="323.10" width="7.4" height="8.30" fill="#ffffff" stroke="#00ff00" stroke-width="1.05"/><line x1="768.70" y1="302.6" x2="768.70" y2="331" stroke="#00ff00" stroke-width="1.0"/><rect x="765.00" y="309.10" width="7.4" height="21.20" fill="#000000" stroke="#00ff00" stroke-width="1.05"/><line x1="781.43" y1="307.1" x2="781.43" y2="326" stroke="#00ff00" stroke-width="1.0"/><rect x="777.73" y="311.70" width="7.4" height="11.00" fill="#ffffff" stroke="#00ff00" stroke-width="1.05"/><line x1="794.15" y1="315" x2="794.15" y2="327.3" stroke="#00ff00" stroke-width="1.0"/><rect x="790.45" y="316.30" width="7.4" height="5.80" fill="#000000" stroke="#00ff00" stroke-width="1.05"/><line x1="806.88" y1="314" x2="806.88" y2="326" stroke="#00ff00" stroke-width="1.0"/><rect x="803.17" y="315.50" width="7.4" height="10.00" fill="#ffffff" stroke="#00ff00" stroke-width="1.05"/><line x1="819.60" y1="319.5" x2="819.60" y2="335.6" stroke="#00ff00" stroke-width="1.0"/><rect x="815.90" y="322.50" width="7.4" height="4.30" fill="#000000" stroke="#00ff00" stroke-width="1.05"/><line x1="832.33" y1="320" x2="832.33" y2="328" stroke="#00ff00" stroke-width="1.0"/><rect x="828.62" y="323.10" width="7.4" height="3.10" fill="#ffffff" stroke="#00ff00" stroke-width="1.05"/><line x1="845.05" y1="315.8" x2="845.05" y2="328" stroke="#00ff00" stroke-width="1.0"/><rect x="841.35" y="319.80" width="7.4" height="5.80" fill="#000000" stroke="#00ff00" stroke-width="1.05"/><line x1="857.77" y1="316" x2="857.77" y2="325" stroke="#00ff00" stroke-width="1.0"/><rect x="854.07" y="318.80" width="7.4" height="2.10" fill="#000000" stroke="#00ff00" stroke-width="1.05"/><line x1="870.50" y1="304" x2="870.50" y2="321" stroke="#00ff00" stroke-width="1.0"/><rect x="866.80" y="304.50" width="7.4" height="15.70" fill="#000000" stroke="#00ff00" stroke-width="1.05"/><line x1="883.23" y1="298.1" x2="883.23" y2="312.4" stroke="#00ff00" stroke-width="1.0"/><rect x="879.52" y="303.80" width="7.4" height="1.70" fill="#000000" stroke="#00ff00" stroke-width="1.05"/><line x1="895.95" y1="306.4" x2="895.95" y2="331.9" stroke="#00ff00" stroke-width="1.0"/><rect x="892.25" y="309.80" width="7.4" height="21.60" fill="#ffffff" stroke="#00ff00" stroke-width="1.05"/><line x1="908.68" y1="342.1" x2="908.68" y2="429.8" stroke="#00ff00" stroke-width="1.0"/><rect x="904.98" y="342.60" width="7.4" height="41.90" fill="#ffffff" stroke="#00ff00" stroke-width="1.05"/><line x1="921.40" y1="337.4" x2="921.40" y2="385" stroke="#00ff00" stroke-width="1.0"/><rect x="917.70" y="337.90" width="7.4" height="44.20" fill="#000000" stroke="#00ff00" stroke-width="1.05"/><line x1="934.12" y1="314.8" x2="934.12" y2="335.5" stroke="#00ff00" stroke-width="1.0"/><rect x="930.42" y="323.60" width="7.4" height="11.40" fill="#000000" stroke="#00ff00" stroke-width="1.05"/><line x1="946.85" y1="320.7" x2="946.85" y2="331.9" stroke="#00ff00" stroke-width="1.0"/><rect x="943.15" y="326.50" width="7.4" height="4.90" fill="#ffffff" stroke="#00ff00" stroke-width="1.05"/></g><line x1="985.5" y1="84" x2="985.5" y2="441.5" stroke="#d0d0d0" stroke-width="1.35"/><line x1="5" y1="441.5" x2="986" y2="441.5" stroke="#d0d0d0" stroke-width="1.35"/><line x1="985.5" y1="88.00" x2="988.3" y2="88.00" stroke="#d0d0d0" stroke-width="1"/><line x1="985.5" y1="114.93" x2="988.3" y2="114.93" stroke="#d0d0d0" stroke-width="1"/><line x1="985.5" y1="141.86" x2="988.3" y2="141.86" stroke="#d0d0d0" stroke-width="1"/><line x1="985.5" y1="168.79" x2="988.3" y2="168.79" stroke="#d0d0d0" stroke-width="1"/><line x1="985.5" y1="195.72" x2="988.3" y2="195.72" stroke="#d0d0d0" stroke-width="1"/><line x1="985.5" y1="222.65" x2="988.3" y2="222.65" stroke="#d0d0d0" stroke-width="1"/><line x1="985.5" y1="249.58" x2="988.3" y2="249.58" stroke="#d0d0d0" stroke-width="1"/><line x1="985.5" y1="276.51" x2="988.3" y2="276.51" stroke="#d0d0d0" stroke-width="1"/><line x1="985.5" y1="303.44" x2="988.3" y2="303.44" stroke="#d0d0d0" stroke-width="1"/><line x1="985.5" y1="330.37" x2="988.3" y2="330.37" stroke="#d0d0d0" stroke-width="1"/><line x1="985.5" y1="357.30" x2="988.3" y2="357.30" stroke="#d0d0d0" stroke-width="1"/><line x1="985.5" y1="384.23" x2="988.3" y2="384.23" stroke="#d0d0d0" stroke-width="1"/><line x1="985.5" y1="411.16" x2="988.3" y2="411.16" stroke="#d0d0d0" stroke-width="1"/><line x1="985.5" y1="438.09" x2="988.3" y2="438.09" stroke="#d0d0d0" stroke-width="1"/><line x1="5.20" y1="441.5" x2="5.20" y2="444.2" stroke="#d0d0d0" stroke-width="1"/><line x1="56.10" y1="441.5" x2="56.10" y2="444.2" stroke="#d0d0d0" stroke-width="1"/><line x1="107.00" y1="441.5" x2="107.00" y2="444.2" stroke="#d0d0d0" stroke-width="1"/><line x1="157.90" y1="441.5" x2="157.90" y2="444.2" stroke="#d0d0d0" stroke-width="1"/><line x1="208.80" y1="441.5" x2="208.80" y2="444.2" stroke="#d0d0d0" stroke-width="1"/><line x1="259.70" y1="441.5" x2="259.70" y2="444.2" stroke="#d0d0d0" stroke-width="1"/><line x1="310.60" y1="441.5" x2="310.60" y2="444.2" stroke="#d0d0d0" stroke-width="1"/><line x1="361.50" y1="441.5" x2="361.50" y2="444.2" stroke="#d0d0d0" stroke-width="1"/><line x1="412.40" y1="441.5" x2="412.40" y2="444.2" stroke="#d0d0d0" stroke-width="1"/><line x1="463.30" y1="441.5" x2="463.30" y2="444.2" stroke="#d0d0d0" stroke-width="1"/><line x1="514.20" y1="441.5" x2="514.20" y2="444.2" stroke="#d0d0d0" stroke-width="1"/><line x1="565.10" y1="441.5" x2="565.10" y2="444.2" stroke="#d0d0d0" stroke-width="1"/><line x1="616.00" y1="441.5" x2="616.00" y2="444.2" stroke="#d0d0d0" stroke-width="1"/><line x1="666.90" y1="441.5" x2="666.90" y2="444.2" stroke="#d0d0d0" stroke-width="1"/><line x1="717.80" y1="441.5" x2="717.80" y2="444.2" stroke="#d0d0d0" stroke-width="1"/><line x1="768.70" y1="441.5" x2="768.70" y2="444.2" stroke="#d0d0d0" stroke-width="1"/><line x1="819.60" y1="441.5" x2="819.60" y2="444.2" stroke="#d0d0d0" stroke-width="1"/><line x1="870.50" y1="441.5" x2="870.50" y2="444.2" stroke="#d0d0d0" stroke-width="1"/><line x1="921.40" y1="441.5" x2="921.40" y2="444.2" stroke="#d0d0d0" stroke-width="1"/><rect x="987.6" y="328" width="30.4" height="8.4" fill="#ffffff"/><path d="M524.4 329.1 L527.6 332.3 L524.4 335.5 L521.2 332.3 Z" fill="#2030ff" stroke="#e0e4ff" stroke-width="0.9"/><path d="M7 92 L13 92 L10 95.3 Z" fill="#e8e8e8"/><circle cx="976.6" cy="94.3" r="4.1" fill="none" stroke="#d8d8d8" stroke-width="0.9"/><circle cx="975.1" cy="93.2" r="0.6" fill="#d8d8d8"/><circle cx="978.1" cy="93.2" r="0.6" fill="#d8d8d8"/><path d="M974.4 95.4 Q976.6 97.6 978.8 95.4" fill="none" stroke="#d8d8d8" stroke-width="0.8"/></svg>
<div class="b" style="left:13px;top:462px;width:1007px;height:128px;background:#fff"></div>
<div class="b" style="left:13px;top:497.8px;width:1007px;height:15.8px;background:#c8c8c8"></div>
<div class="b" style="left:1.3px;top:472.8px;width:11.2px;height:135px;background:#cddcec"></div>
<div class="b" style="left:12.5px;top:590px;width:2.5px;height:17px;background:#fafafa"></div>
<div class="b" style="left:13px;top:590px;width:1010px;height:1px;background:#202020"></div>
<div class="b" style="left:14.8px;top:590px;width:35.5px;height:16px;background:#fff;border:1px solid #202020;border-top:none"></div>
<div class="b" style="left:1px;top:609.8px;width:1022px;height:1px;background:#a8a8a8"></div>
<svg width="1024" height="630" viewBox="0 0 1024 630"><line x1="12.7" y1="461.9" x2="1020" y2="461.9" stroke="#a0a0a0" stroke-width="1"/><line x1="12.7" y1="462" x2="12.7" y2="590" stroke="#b8b8b8" stroke-width="1"/><line x1="13" y1="481.8" x2="1020" y2="481.8" stroke="#e2e2e2" stroke-width="1"/><line x1="112.3" y1="462.5" x2="112.3" y2="497.8" stroke="#e2e2e2" stroke-width="1"/><line x1="250" y1="462.5" x2="250" y2="497.8" stroke="#e2e2e2" stroke-width="1"/><line x1="318.25" y1="462.5" x2="318.25" y2="497.8" stroke="#e2e2e2" stroke-width="1"/><line x1="371.75" y1="462.5" x2="371.75" y2="497.8" stroke="#e2e2e2" stroke-width="1"/><line x1="440" y1="462.5" x2="440" y2="497.8" stroke="#e2e2e2" stroke-width="1"/><line x1="516.25" y1="462.5" x2="516.25" y2="497.8" stroke="#e2e2e2" stroke-width="1"/><line x1="593" y1="462.5" x2="593" y2="497.8" stroke="#e2e2e2" stroke-width="1"/><line x1="669.25" y1="462.5" x2="669.25" y2="497.8" stroke="#e2e2e2" stroke-width="1"/><line x1="745.5" y1="462.5" x2="745.5" y2="497.8" stroke="#e2e2e2" stroke-width="1"/><line x1="821.8" y1="462.5" x2="821.8" y2="497.8" stroke="#e2e2e2" stroke-width="1"/><line x1="898" y1="462.5" x2="898" y2="497.8" stroke="#e2e2e2" stroke-width="1"/><line x1="1019.8" y1="462" x2="1019.8" y2="590" stroke="#e8e8e8" stroke-width="1"/><path d="M4.3 464.2 L8.7 468.4 M8.7 464.2 L4.3 468.4" stroke="#111" stroke-width="1.3"/><path d="M16.4 484.6 h5.6 l2.6 2.6 v8.4 h-8.2 Z" fill="#fafafa" stroke="#8a8a8a" stroke-width="0.8"/><circle cx="24.4" cy="493.4" r="2.8" fill="#1a88e8" stroke="#0a60b0" stroke-width="0.5"/><rect x="16.4" y="500.8" width="9" height="10.6" rx="1.2" fill="#fafafa" stroke="#909090" stroke-width="0.9"/><path d="M19.6 503.4 h2.6 v2.8 h1.6 L20.9 509.4 L18 506.2 h1.6 Z" fill="#e84818"/><path d="M1009.2 486.6 L1013.8 491.2 M1013.8 486.6 L1009.2 491.2" stroke="#909090" stroke-width="1.2"/><line x1="104.4" y1="593.5" x2="104.4" y2="603.5" stroke="#505050" stroke-width="1"/><line x1="159" y1="593.5" x2="159" y2="603.5" stroke="#505050" stroke-width="1"/><line x1="201.7" y1="593.5" x2="201.7" y2="603.5" stroke="#505050" stroke-width="1"/><line x1="263.6" y1="593.5" x2="263.6" y2="603.5" stroke="#505050" stroke-width="1"/><line x1="338" y1="593.5" x2="338" y2="603.5" stroke="#505050" stroke-width="1"/><line x1="400.5" y1="593.5" x2="400.5" y2="603.5" stroke="#505050" stroke-width="1"/><line x1="446.4" y1="593.5" x2="446.4" y2="603.5" stroke="#505050" stroke-width="1"/><line x1="481.2" y1="593.5" x2="481.2" y2="603.5" stroke="#505050" stroke-width="1"/><line x1="531" y1="593.5" x2="531" y2="603.5" stroke="#505050" stroke-width="1"/><line x1="589.2" y1="593.5" x2="589.2" y2="603.5" stroke="#505050" stroke-width="1"/><line x1="643" y1="593.5" x2="643" y2="603.5" stroke="#505050" stroke-width="1"/><line x1="457.3" y1="613.5" x2="457.3" y2="628" stroke="#c0c0c0" stroke-width="1"/><line x1="550.4" y1="613.5" x2="550.4" y2="628" stroke="#c0c0c0" stroke-width="1"/><line x1="630.9" y1="613.5" x2="630.9" y2="628" stroke="#c0c0c0" stroke-width="1"/><line x1="687.5" y1="613.5" x2="687.5" y2="628" stroke="#c0c0c0" stroke-width="1"/><line x1="744.2" y1="613.5" x2="744.2" y2="628" stroke="#c0c0c0" stroke-width="1"/><line x1="798.2" y1="613.5" x2="798.2" y2="628" stroke="#c0c0c0" stroke-width="1"/><line x1="853.7" y1="613.5" x2="853.7" y2="628" stroke="#c0c0c0" stroke-width="1"/><line x1="905.4" y1="613.5" x2="905.4" y2="628" stroke="#c0c0c0" stroke-width="1"/><rect x="910.20" y="615.4" width="1.5" height="7.80" fill="#7a9a28"/><rect x="910.20" y="623.20" width="1.5" height="2.40" fill="#2a5a7c"/><rect x="912.60" y="615.4" width="1.5" height="6.90" fill="#7a9a28"/><rect x="912.60" y="622.30" width="1.5" height="3.30" fill="#2a5a7c"/><rect x="915.00" y="615.4" width="1.5" height="6.00" fill="#7a9a28"/><rect x="915.00" y="621.40" width="1.5" height="4.20" fill="#2a5a7c"/><rect x="917.40" y="615.4" width="1.5" height="5.10" fill="#7a9a28"/><rect x="917.40" y="620.50" width="1.5" height="5.10" fill="#2a5a7c"/><rect x="919.80" y="615.4" width="1.5" height="4.20" fill="#7a9a28"/><rect x="919.80" y="619.60" width="1.5" height="6.00" fill="#2a5a7c"/><rect x="922.20" y="615.4" width="1.5" height="3.30" fill="#7a9a28"/><rect x="922.20" y="618.70" width="1.5" height="6.90" fill="#2a5a7c"/><rect x="924.60" y="615.4" width="1.5" height="2.40" fill="#7a9a28"/><rect x="924.60" y="617.80" width="1.5" height="7.80" fill="#2a5a7c"/><rect x="927.00" y="615.4" width="1.5" height="1.50" fill="#7a9a28"/><rect x="927.00" y="616.90" width="1.5" height="8.70" fill="#2a5a7c"/><path d="M1013 628 L1021.5 619.5 M1016 628 L1021.5 622.5 M1019 628 L1021.5 625.5" stroke="#a0a0a0" stroke-width="0.8"/></svg>
<div class="t" style="left:70.76px;top:7.60px;font-size:9.8px;color:#1a1a1a;transform:scaleX(0.9373);">: FXGiants-Real10 - Notesco (BVI) Limited - [AUDCAD,M5]</div>
<div class="t" style="left:22.48px;top:28.00px;font-size:10.5px;color:#1a1a1a;transform:scaleX(0.6095);">ファイル</div>
<div class="t" style="left:51.84px;top:28.00px;font-size:10.5px;color:#1a1a1a;transform:scaleX(0.8583);">(F)</div>
<div class="t" style="left:77.73px;top:28.00px;font-size:10.5px;color:#1a1a1a;transform:scaleX(0.8700);">表示</div>
<div class="t" style="left:97.91px;top:28.00px;font-size:10.5px;color:#1a1a1a;transform:scaleX(0.9917);">(V)</div>
<div class="t" style="left:125.31px;top:28.00px;font-size:10.5px;color:#1a1a1a;transform:scaleX(0.8850);">挿入</div>
<div class="t" style="left:143.53px;top:28.00px;font-size:10.5px;color:#1a1a1a;transform:scaleX(1.0750);">(I)</div>
<div class="t" style="left:167.87px;top:28.00px;font-size:10.5px;color:#1a1a1a;transform:scaleX(0.6325);">チャート</div>
<div class="t" style="left:195.76px;top:28.00px;font-size:10.5px;color:#1a1a1a;transform:scaleX(0.8385);">(C)</div>
<div class="t" style="left:222.56px;top:28.00px;font-size:10.5px;color:#1a1a1a;transform:scaleX(0.6406);">ツール</div>
<div class="t" style="left:245.65px;top:28.00px;font-size:10.5px;color:#1a1a1a;transform:scaleX(0.8500);">(T)</div>
<div class="t" style="left:271.96px;top:28.00px;font-size:10.5px;color:#1a1a1a;transform:scaleX(0.6385);">ウィンドウ</div>
<div class="t" style="left:306.92px;top:28.00px;font-size:10.5px;color:#1a1a1a;transform:scaleX(0.9800);">(W)</div>
<div class="t" style="left:337.15px;top:28.00px;font-size:10.5px;color:#1a1a1a;transform:scaleX(0.7533);">ヘルプ</div>
<div class="t" style="left:361.25px;top:28.00px;font-size:10.5px;color:#1a1a1a;transform:scaleX(1.0538);">(H)</div>
<div class="t" style="left:205.72px;top:46.90px;font-size:10.5px;color:#1a1a1a;transform:scaleX(0.8833);">新規注文</div>
<div class="t" style="left:335.72px;top:47.40px;font-size:10.5px;color:#1a1a1a;transform:scaleX(0.8902);">自動売買</div>
<div class="t" style="left:252.76px;top:68.80px;font-size:9.5px;color:#555555;transform:scaleX(0.8417);">M1</div>
<div class="t" style="left:275.17px;top:68.80px;font-size:9.5px;color:#555555;transform:scaleX(0.8333);">M5</div>
<div class="t" style="left:295.47px;top:68.80px;font-size:9.5px;color:#555555;transform:scaleX(0.8294);">M15</div>
<div class="t" style="left:317.86px;top:68.80px;font-size:9.5px;color:#555555;transform:scaleX(0.8412);">M30</div>
<div class="t" style="left:342.68px;top:68.80px;font-size:9.5px;color:#555555;transform:scaleX(0.8182);">H1</div>
<div class="t" style="left:363.78px;top:68.80px;font-size:9.5px;color:#555555;transform:scaleX(1.0200);">H4</div>
<div class="t" style="left:387.15px;top:68.80px;font-size:9.5px;color:#555555;transform:scaleX(0.8545);">D1</div>
<div class="t" style="left:409.80px;top:68.80px;font-size:9.5px;color:#555555;transform:scaleX(0.8000);">W1</div>
<div class="t" style="left:429.65px;top:68.80px;font-size:9.5px;color:#555555;transform:scaleX(0.9538);">MN</div>
<div class="t" style="left:16.60px;top:89.60px;font-size:8.5px;color:#f0f0f0;transform:scaleX(0.9100);">AUDCAD,M5</div>
<div class="t" style="left:67.40px;top:89.60px;font-size:8.5px;color:#f0f0f0;transform:scaleX(0.8608);">0.96094 0.96101 0.96082 0.96083</div>
<div class="t" style="left:943.04px;top:90.00px;font-size:8.5px;color:#ececec;transform:scaleX(0.9630);">EATOP</div>
<div class="t" style="left:47.94px;top:324.00px;font-size:8.5px;color:#d0d0d0;transform:scaleX(0.9613);">buy 0.04</div>
<div class="t" style="left:989.50px;top:84.30px;font-size:8.7px;color:#ececec;transform:scaleX(0.8387);">0.96490</div>
<div class="t" style="left:989.50px;top:111.23px;font-size:8.7px;color:#ececec;transform:scaleX(0.8387);">0.96445</div>
<div class="t" style="left:989.50px;top:138.16px;font-size:8.7px;color:#ececec;transform:scaleX(0.8387);">0.96400</div>
<div class="t" style="left:989.50px;top:165.09px;font-size:8.7px;color:#ececec;transform:scaleX(0.8387);">0.96355</div>
<div class="t" style="left:989.50px;top:192.02px;font-size:8.7px;color:#ececec;transform:scaleX(0.8387);">0.96310</div>
<div class="t" style="left:989.50px;top:218.95px;font-size:8.7px;color:#ececec;transform:scaleX(0.8387);">0.96265</div>
<div class="t" style="left:989.50px;top:245.88px;font-size:8.7px;color:#ececec;transform:scaleX(0.8387);">0.96220</div>
<div class="t" style="left:989.50px;top:272.81px;font-size:8.7px;color:#ececec;transform:scaleX(0.8387);">0.96175</div>
<div class="t" style="left:989.50px;top:299.74px;font-size:8.7px;color:#ececec;transform:scaleX(0.8387);">0.96130</div>
<div class="t" style="left:989.50px;top:353.60px;font-size:8.7px;color:#ececec;transform:scaleX(0.8387);">0.96040</div>
<div class="t" style="left:989.50px;top:380.53px;font-size:8.7px;color:#ececec;transform:scaleX(0.8387);">0.95995</div>
<div class="t" style="left:989.50px;top:407.46px;font-size:8.7px;color:#ececec;transform:scaleX(0.8387);">0.95950</div>
<div class="t" style="left:989.50px;top:434.39px;font-size:8.7px;color:#ececec;transform:scaleX(0.8387);">0.95905</div>
<div class="t" style="left:989.50px;top:328.20px;font-size:8.7px;color:#000;transform:scaleX(0.8387);">0.96083</div>
<div class="t" style="left:3.74px;top:445.40px;font-size:8.8px;color:#ececec;transform:scaleX(0.8610);">1 Apr 2026</div>
<div class="t" style="left:54.63px;top:445.40px;font-size:8.8px;color:#ececec;transform:scaleX(0.8705);">1 Apr 18:25</div>
<div class="t" style="left:105.53px;top:445.40px;font-size:8.8px;color:#ececec;transform:scaleX(0.8705);">1 Apr 18:45</div>
<div class="t" style="left:156.43px;top:445.40px;font-size:8.8px;color:#ececec;transform:scaleX(0.8705);">1 Apr 19:05</div>
<div class="t" style="left:207.33px;top:445.40px;font-size:8.8px;color:#ececec;transform:scaleX(0.8705);">1 Apr 19:25</div>
<div class="t" style="left:258.23px;top:445.40px;font-size:8.8px;color:#ececec;transform:scaleX(0.8705);">1 Apr 19:45</div>
<div class="t" style="left:309.13px;top:445.40px;font-size:8.8px;color:#ececec;transform:scaleX(0.8705);">1 Apr 20:05</div>
<div class="t" style="left:360.03px;top:445.40px;font-size:8.8px;color:#ececec;transform:scaleX(0.8705);">1 Apr 20:25</div>
<div class="t" style="left:410.93px;top:445.40px;font-size:8.8px;color:#ececec;transform:scaleX(0.8705);">1 Apr 20:45</div>
<div class="t" style="left:461.83px;top:445.40px;font-size:8.8px;color:#ececec;transform:scaleX(0.8705);">1 Apr 21:05</div>
<div class="t" style="left:512.73px;top:445.40px;font-size:8.8px;color:#ececec;transform:scaleX(0.8705);">1 Apr 21:25</div>
<div class="t" style="left:563.63px;top:445.40px;font-size:8.8px;color:#ececec;transform:scaleX(0.8705);">1 Apr 21:45</div>
<div class="t" style="left:614.53px;top:445.40px;font-size:8.8px;color:#ececec;transform:scaleX(0.8705);">1 Apr 22:05</div>
<div class="t" style="left:665.43px;top:445.40px;font-size:8.8px;color:#ececec;transform:scaleX(0.8705);">1 Apr 22:25</div>
<div class="t" style="left:716.33px;top:445.40px;font-size:8.8px;color:#ececec;transform:scaleX(0.8705);">1 Apr 22:45</div>
<div class="t" style="left:767.23px;top:445.40px;font-size:8.8px;color:#ececec;transform:scaleX(0.8705);">1 Apr 23:05</div>
<div class="t" style="left:818.13px;top:445.40px;font-size:8.8px;color:#ececec;transform:scaleX(0.8705);">1 Apr 23:25</div>
<div class="t" style="left:869.03px;top:445.40px;font-size:8.8px;color:#ececec;transform:scaleX(0.8705);">1 Apr 23:45</div>
<div class="t" style="left:920.80px;top:445.40px;font-size:8.8px;color:#ececec;transform:scaleX(0.8511);">2 Apr 00:05</div>
<div class="t" style="left:17.80px;top:466.50px;font-size:10px;color:#1a1a1a;">注文番号</div>
<div class="t" style="left:226.00px;top:466.50px;font-size:10px;color:#1a1a1a;">時間</div>
<div class="t" style="left:277.00px;top:466.50px;font-size:10px;color:#1a1a1a;transform:scaleX(0.9487);">取引種別</div>
<div class="t" style="left:347.74px;top:466.50px;font-size:10px;color:#1a1a1a;transform:scaleX(1.0139);">数量</div>
<div class="t" style="left:401.10px;top:466.50px;font-size:10px;color:#1a1a1a;transform:scaleX(0.9013);">通貨ペア</div>
<div class="t" style="left:493.00px;top:466.50px;font-size:10px;color:#1a1a1a;">価格</div>
<div class="t" style="left:521.54px;top:466.50px;font-size:10px;color:#1a1a1a;transform:scaleX(0.9601);">決済逆指値(S/...</div>
<div class="t" style="left:606.05px;top:466.50px;font-size:10px;color:#1a1a1a;transform:scaleX(0.9508);">決済指値(T/P)</div>
<div class="t" style="left:723.00px;top:466.50px;font-size:10px;color:#1a1a1a;transform:scaleX(0.8947);">価格</div>
<div class="t" style="left:789.01px;top:466.50px;font-size:10px;color:#1a1a1a;transform:scaleX(0.9857);">手数料</div>
<div class="t" style="left:864.44px;top:466.50px;font-size:10px;color:#1a1a1a;transform:scaleX(0.7778);">スワップ</div>
<div class="t" style="left:996.50px;top:466.50px;font-size:10px;color:#1a1a1a;transform:scaleX(0.9474);">損益</div>
<div class="t" style="left:65.60px;top:468.00px;font-size:9px;color:#909090;transform:scaleX(1.7000);">/</div>
<div class="t" style="left:167.86px;top:484.40px;font-size:9.6px;color:#1a1a1a;transform:scaleX(0.8908);">2026.04.01 21:30:01</div>
<div class="t" style="left:298.89px;top:485.00px;font-size:9.6px;color:#1a1a1a;transform:scaleX(1.1071);">buy</div>
<div class="t" style="left:351.25px;top:484.40px;font-size:9.6px;color:#1a1a1a;transform:scaleX(0.9722);">0.04</div>
<div class="t" style="left:406.25px;top:485.00px;font-size:9.6px;color:#1a1a1a;transform:scaleX(1.0081);">audcad</div>
<div class="t" style="left:483.00px;top:484.40px;font-size:9.6px;color:#1a1a1a;transform:scaleX(0.8824);">0.96081</div>
<div class="t" style="left:559.50px;top:484.40px;font-size:9.6px;color:#1a1a1a;transform:scaleX(0.9118);">0.00000</div>
<div class="t" style="left:636.25px;top:484.40px;font-size:9.6px;color:#1a1a1a;transform:scaleX(0.9044);">0.00000</div>
<div class="t" style="left:712.00px;top:484.40px;font-size:9.6px;color:#1a1a1a;transform:scaleX(0.9118);">0.96079</div>
<div class="t" style="left:805.34px;top:484.40px;font-size:9.6px;color:#1a1a1a;transform:scaleX(1.1583);">-76</div>
<div class="t" style="left:885.34px;top:484.40px;font-size:9.6px;color:#1a1a1a;transform:scaleX(1.0556);">28</div>
<div class="t" style="left:987.20px;top:484.40px;font-size:9.6px;color:#1a1a1a;">-10</div>
<div class="t" style="left:31.25px;top:501.00px;font-size:10px;color:#1a1a1a;transform:scaleX(0.8886);-webkit-text-stroke:0.6px #1a1a1a;">残高: 374 215 JPY</div>
<div class="t" style="left:111.00px;top:501.00px;font-size:10px;color:#1a1a1a;transform:scaleX(0.9239);-webkit-text-stroke:0.6px #1a1a1a;">有効証拠金: 374 157</div>
<div class="t" style="left:201.00px;top:501.00px;font-size:10px;color:#1a1a1a;transform:scaleX(0.9583);-webkit-text-stroke:0.6px #1a1a1a;">必要証拠金: 878</div>
<div class="t" style="left:274.00px;top:501.00px;font-size:10px;color:#1a1a1a;transform:scaleX(0.9239);-webkit-text-stroke:0.6px #1a1a1a;">余剰証拠金: 373 279</div>
<div class="t" style="left:365.00px;top:501.00px;font-size:10px;color:#1a1a1a;transform:scaleX(0.9375);-webkit-text-stroke:0.6px #1a1a1a;">証拠金維持率: 42607.12%</div>
<div class="t" style="left:986.80px;top:501.80px;font-size:10px;color:#1a1a1a;transform:scaleX(0.9267);-webkit-text-stroke:0.6px #1a1a1a;">-58</div>
<div class="t" style="left:23.40px;top:592.60px;font-size:10px;color:#000;">取引</div>
<div class="t" style="left:57.63px;top:592.60px;font-size:10px;color:#606060;transform:scaleX(0.9658);">運用比率</div>
<div class="t" style="left:112.34px;top:592.60px;font-size:10px;color:#606060;transform:scaleX(0.9579);">口座履歴</div>
<div class="t" style="left:166.72px;top:592.60px;font-size:10px;color:#606060;transform:scaleX(0.6816);">ニュース</div>
<div class="t" style="left:209.03px;top:592.60px;font-size:10px;color:#606060;transform:scaleX(0.7741);">アラーム設定</div>
<div class="t" style="left:270.05px;top:592.60px;font-size:10px;color:#606060;transform:scaleX(0.7269);">メールボックス</div>
<div class="t" style="left:345.30px;top:592.60px;font-size:10px;color:#606060;transform:scaleX(0.7021);">マーケット</div>
<div class="t" style="left:407.12px;top:592.60px;font-size:10px;color:#606060;transform:scaleX(0.7919);">シグナル</div>
<div class="t" style="left:455.20px;top:592.60px;font-size:10px;color:#606060;transform:scaleX(0.9368);">記事</div>
<div class="t" style="left:487.92px;top:592.60px;font-size:10px;color:#606060;transform:scaleX(0.7400);">ライブラリ</div>
<div class="t" style="left:538.26px;top:592.60px;font-size:10px;color:#606060;transform:scaleX(0.7368);">エキスパート</div>
<div class="t" style="left:597.40px;top:592.60px;font-size:10px;color:#606060;transform:scaleX(0.9615);">操作履歴</div>
<div class="t" style="left:321.50px;top:598.20px;font-size:7.5px;color:#e02020;transform:scaleX(1.0625);-webkit-text-stroke:0.2px #e02020;">23</div>
<div class="t" style="left:379.58px;top:598.20px;font-size:7.5px;color:#e02020;transform:scaleX(1.0182);-webkit-text-stroke:0.2px #e02020;">105</div>
<div class="t" style="left:2.01px;top:616.00px;font-size:10px;color:#1a1a1a;transform:scaleX(0.7893);">F1キーでヘルプが表示されます</div>
<div class="t" style="left:461.86px;top:617.30px;font-size:10px;color:#1a1a1a;transform:scaleX(0.9419);">Default</div>
<div class="t" style="left:931.38px;top:617.30px;font-size:10px;color:#1a1a1a;transform:scaleX(0.9153);">159724/60 kb</div>
<div class="t" style="left:1008.60px;top:45.60px;font-size:9px;color:#ffffff;font-weight:bold;">1</div>
<div class="t" style="left:174.80px;top:68.80px;font-size:9.5px;color:#686868;font-weight:bold;transform:scaleX(0.9000);">A</div>
<div class="t" style="left:1.6px;top:606.5px;font-size:10px;color:#303030;transform:rotate(-90deg) scaleX(0.76);transform-origin:0 0">ターミナル</div>
<div class="b" style="left:0;top:0;width:1024px;height:630px;border:1px solid #3e4a5a;border-bottom:1.7px solid #3e4a5a"></div>
</body></html>
